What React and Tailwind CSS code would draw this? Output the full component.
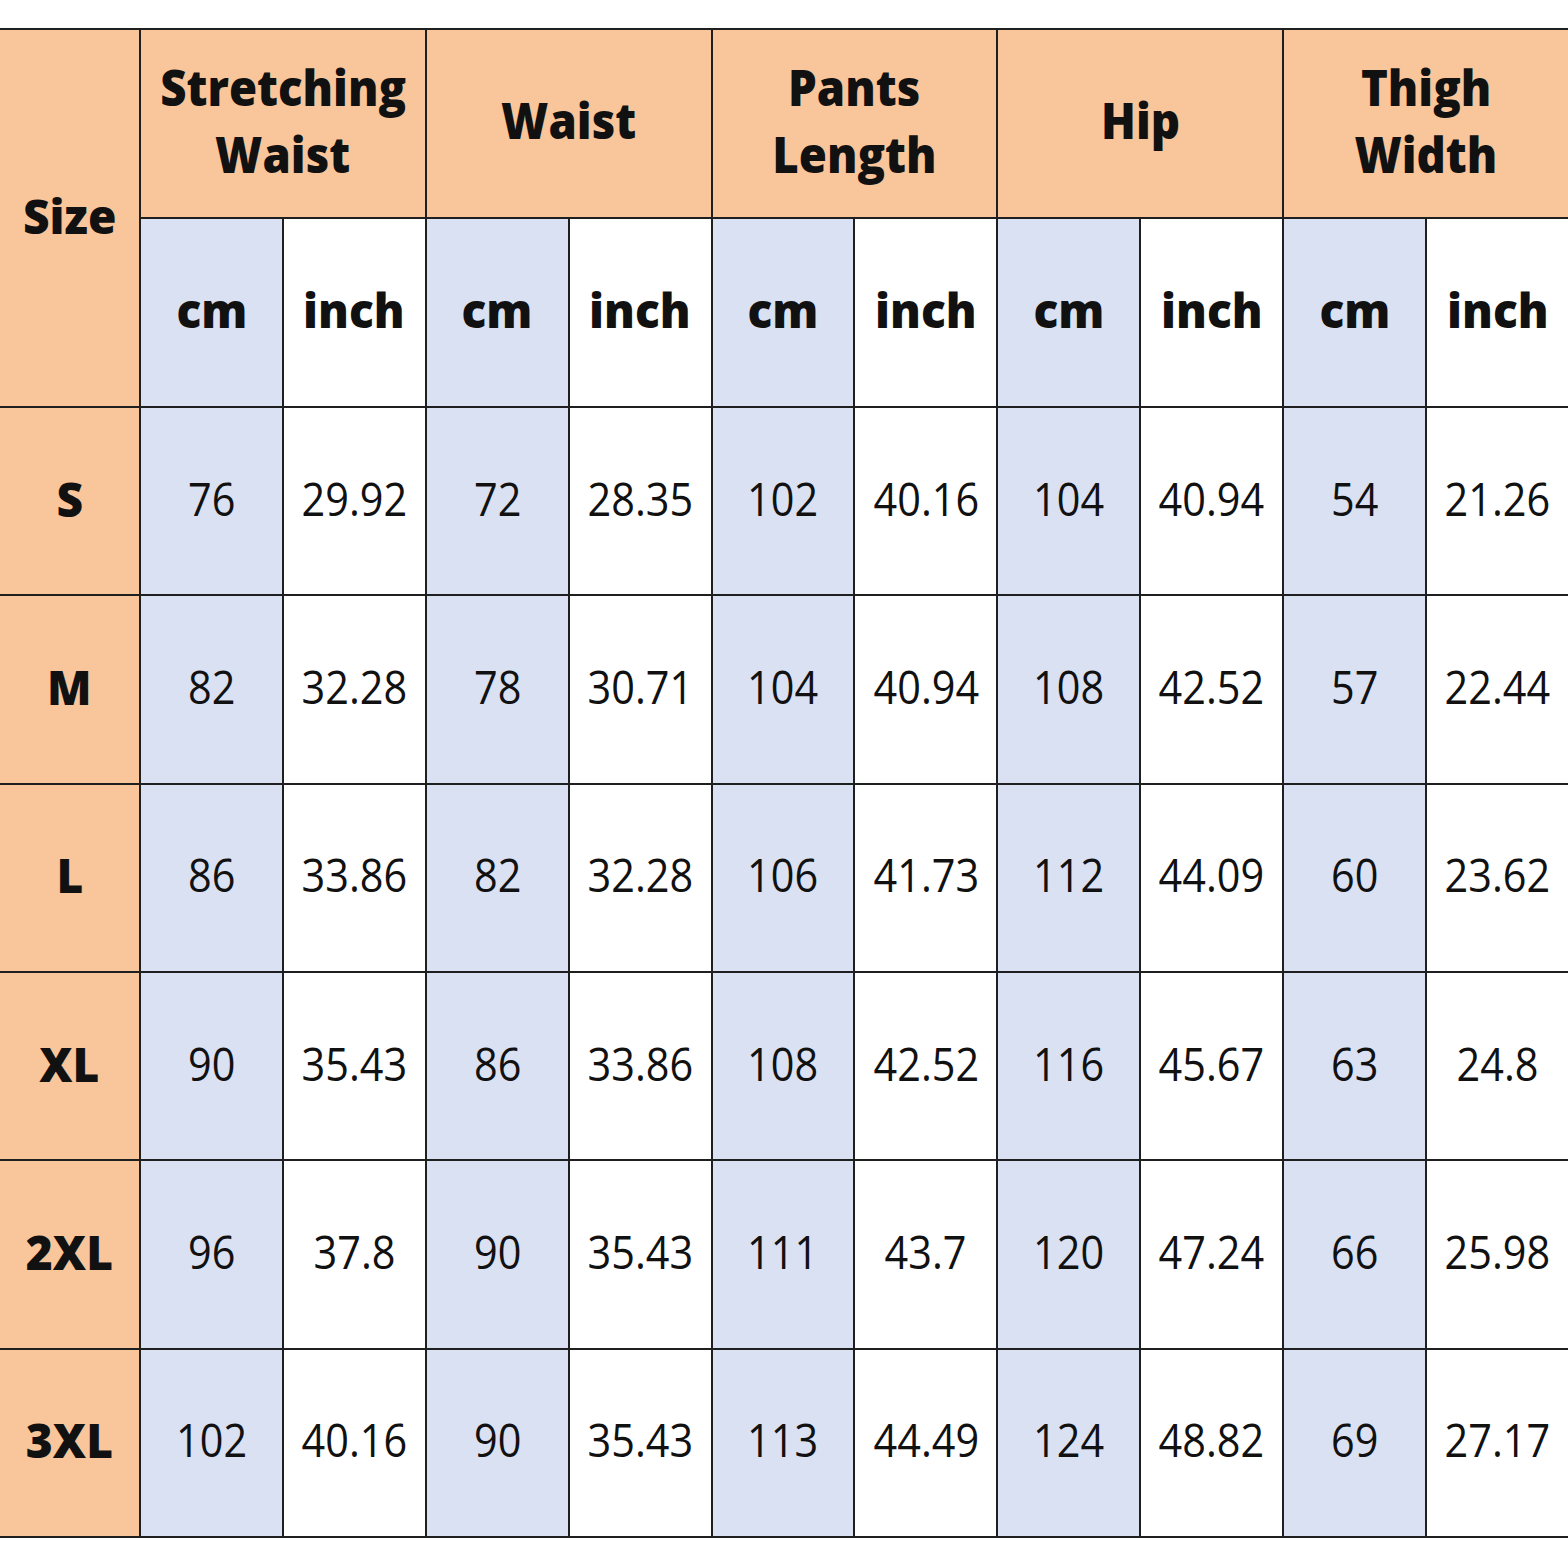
import React from 'react';

const groups = ['Stretching Waist', 'Waist', 'Pants Length', 'Hip', 'Thigh Width'];

const rows = [
  ['S', '76', '29.92', '72', '28.35', '102', '40.16', '104', '40.94', '54', '21.26'],
  ['M', '82', '32.28', '78', '30.71', '104', '40.94', '108', '42.52', '57', '22.44'],
  ['L', '86', '33.86', '82', '32.28', '106', '41.73', '112', '44.09', '60', '23.62'],
  ['XL', '90', '35.43', '86', '33.86', '108', '42.52', '116', '45.67', '63', '24.8'],
  ['2XL', '96', '37.8', '90', '35.43', '111', '43.7', '120', '47.24', '66', '25.98'],
  ['3XL', '102', '40.16', '90', '35.43', '113', '44.49', '124', '48.82', '69', '27.17'],
];

const orange = 'bg-[#f9c59b]';
const blue = 'bg-[#dae1f3]';
const line = 'border-[#1f1f1f]';

const Label = ({ children, bold = false, size = 'text-[45px]', squeeze = 'scale-x-[0.92]' }) => (
  <span
    className={`${size} ${bold ? 'font-extrabold' : 'font-normal'} ${squeeze} inline-block -translate-y-[3px] text-center leading-[67px] text-[#111]`}
  >
    {children}
  </span>
);

const App = () => {
  return (
    <div className="h-[1568px] w-[1568px] bg-white pt-[28px] font-['Open_Sans','Noto_Sans',sans-serif]">
      <div
        className={`grid h-[1510px] w-[1568px] grid-cols-[139px_repeat(10,1fr)] grid-rows-[187px_189px_repeat(6,1fr)] border-t-2 border-b-2 ${line}`}
      >
        <div className={`row-span-2 flex items-center justify-center ${orange}`}>
          <Label bold size="text-[48px]" squeeze="scale-x-[0.96]">Size</Label>
        </div>
        {groups.map((g) => (
          <div
            key={g}
            className={`col-span-2 flex flex-col items-center justify-center border-l-2 ${line} ${orange}`}
          >
            {g.split(' ').map((w) => (
              <Label key={w} bold size="text-[49px]" squeeze="scale-x-[0.93]">{w}</Label>
            ))}
          </div>
        ))}
        {groups.map((g) => (
          <React.Fragment key={`${g}-units`}>
            <div className={`flex items-center justify-center border-l-2 border-t-2 ${line} ${blue}`}>
              <Label bold size="text-[48px]" squeeze="scale-x-[0.96]">cm</Label>
            </div>
            <div className={`flex items-center justify-center border-l-2 border-t-2 ${line} bg-white`}>
              <Label bold size="text-[48px]" squeeze="scale-x-[0.96]">inch</Label>
            </div>
          </React.Fragment>
        ))}
        {rows.map((r) => (
          <React.Fragment key={r[0]}>
            <div className={`flex items-center justify-center border-t-2 ${line} ${orange}`}>
              <Label bold size="text-[48px]" squeeze="scale-x-[0.96]">{r[0]}</Label>
            </div>
            {r.slice(1).map((v, i) => (
              <div
                key={`${r[0]}-${i}`}
                className={`flex items-center justify-center border-l-2 border-t-2 ${line} ${i % 2 === 0 ? blue : 'bg-white'}`}
              >
                <Label>{v}</Label>
              </div>
            ))}
          </React.Fragment>
        ))}
      </div>
    </div>
  );
};

export default App;
